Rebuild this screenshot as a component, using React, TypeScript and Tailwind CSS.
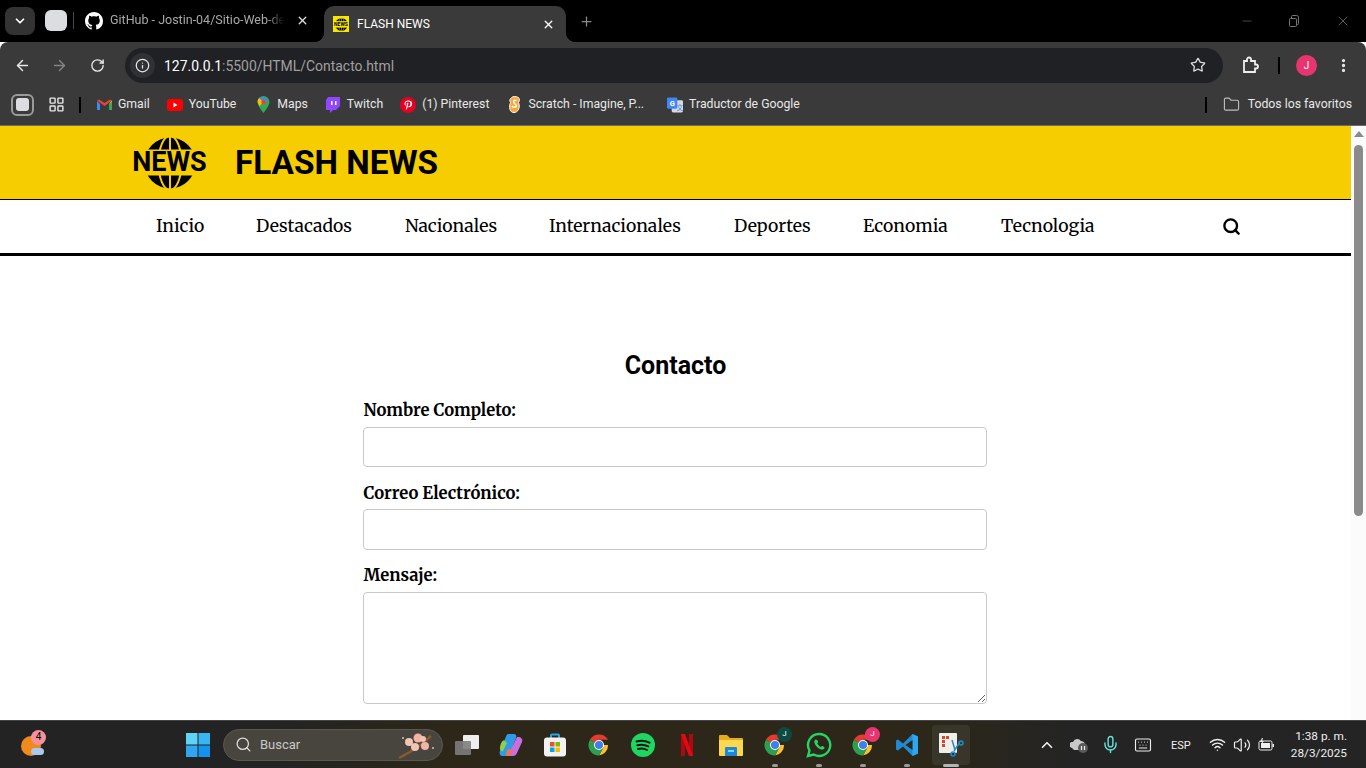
import React from "react";
import { ArrowLeft, ArrowRight, RotateCw, Star, MoreVertical, ChevronDown, X, Plus, Minus, Info, Search, ChevronUp, Mic, Keyboard, Wifi, Volume2, LayoutGrid, Folder } from "lucide-react";

const serif = "font-['Merriweather','DejaVu_Serif','Liberation_Serif',serif]";

function GitHubMark({ size = 18 }: { size?: number }) {
  return (
    <svg width={size} height={size} viewBox="0 0 16 16" fill="#fff">
      <path d="M8 0C3.58 0 0 3.58 0 8c0 3.54 2.29 6.53 5.47 7.59.4.07.55-.17.55-.38 0-.19-.01-.82-.01-1.49-2.01.37-2.53-.49-2.69-.94-.09-.23-.48-.94-.82-1.13-.28-.15-.68-.52-.01-.53.63-.01 1.08.58 1.23.82.72 1.21 1.87.87 2.33.66.07-.52.28-.87.51-1.07-1.78-.2-3.64-.89-3.64-3.95 0-.87.31-1.59.82-2.15-.08-.2-.36-1.02.08-2.12 0 0 .67-.21 2.2.82.64-.18 1.32-.27 2-.27s1.36.09 2 .27c1.53-1.04 2.2-.82 2.2-.82.44 1.1.16 1.92.08 2.12.51.56.82 1.27.82 2.15 0 3.07-1.87 3.75-3.65 3.95.29.25.54.73.54 1.48 0 1.07-.01 1.93-.01 2.2 0 .21.15.46.55.38A8.01 8.01 0 0 0 16 8c0-4.42-3.58-8-8-8z" />
    </svg>
  );
}

function NewsGlobe({ className, bg = "#f5cd00" }: { className?: string; bg?: string }) {
  return (
    <svg viewBox="0 0 52 52" className={className}>
      <circle cx="26" cy="26" r="25.500" fill="#000" />
      <ellipse cx="26" cy="26" rx="11.500" ry="27" fill="none" stroke={bg} strokeWidth="2" />
      <path d="M26 0v52" stroke={bg} strokeWidth="2" />
      <rect x="0" y="12.500" width="52" height="26" fill={bg} />
    </svg>
  );
}

function Favicon() {
  return (
    <span className="relative flex h-4 w-4 items-center justify-center bg-[#f7e600]">
      <NewsGlobe className="h-[13px] w-[13px]" bg="#f7e600" />
      <span className="absolute text-[5px] leading-none font-bold text-black font-['Roboto',sans-serif]">NEWS</span>
    </span>
  );
}

function ChromeIcon({ size = 24 }: { size?: number }) {
  return (
    <svg width={size} height={size} viewBox="0 0 48 48">
      <path d="M24 24 5.800 13.500A21 21 0 0 1 42.200 13.500H24Z" fill="#e33b2e" />
      <path d="M24 24h18.200A21 21 0 0 1 24 45l9-16Z" fill="#fbc02d" />
      <path d="M24 24l9 5-9 16A21 21 0 0 1 5.800 13.500Z" fill="#2e9e4f" />
      <circle cx="24" cy="24" r="10" fill="#fff" />
      <circle cx="24" cy="24" r="8" fill="#3f7fe8" />
    </svg>
  );
}

function Bookmark({ icon, label, className }: { icon: React.ReactNode; label: string; className?: string }) {
  return (
    <div className={"flex items-center gap-[6px] " + (className ?? "")}>
      <span className="flex h-4 w-4 items-center justify-center">{icon}</span>
      <span className="whitespace-nowrap text-[12.25px] text-[#e8e8e8] font-['Roboto',sans-serif]">{label}</span>
    </div>
  );
}

function TaskSlot({ children, dot, active }: { children: React.ReactNode; dot?: boolean; active?: boolean }) {
  return (
    <div className="relative flex h-[44px] w-[44px] shrink-0 items-center justify-center">
      {active && <span className="absolute inset-y-[2px] inset-x-[3px] rounded bg-[#38352a]" />}
      <span className="relative flex items-center justify-center">{children}</span>
      {dot && <span className="absolute bottom-0 left-1/2 h-[3px] w-[6px] -translate-x-1/2 rounded-full bg-[#9a9a9a]" />}
      {active && <span className="absolute bottom-0 left-1/2 h-[3px] w-[16px] -translate-x-1/2 rounded-full bg-[#b5b5b5]" />}
    </div>
  );
}

function Badge({ color, text }: { color: string; text: string }) {
  return (
    <span className={"absolute right-[-5px] top-[-6px] flex h-[15px] w-[15px] items-center justify-center rounded-full text-[8px] text-white font-['Roboto',sans-serif] " + color}>{text}</span>
  );
}

const navItems = [
  { label: "Inicio", w: "w-[100px]" },
  { label: "Destacados", w: "w-[149px]" },
  { label: "Nacionales", w: "w-[144px]" },
  { label: "Internacionales", w: "w-[185px]" },
  { label: "Deportes", w: "w-[129px]" },
  { label: "Economia", w: "w-[138px]" },
  { label: "Tecnologia", w: "w-[120px]" },
];

export default function App() {
  return (
    <div className="flex h-[768px] w-[1366px] flex-col overflow-hidden bg-white font-['Roboto',sans-serif]">
      {/* Tab strip */}
      <div className="flex h-[42px] shrink-0 items-end bg-black">
        <div className="mb-[7px] ml-[5px] flex h-[28px] w-[30px] items-center justify-center rounded-[8px] bg-[#333333]">
          <ChevronDown size={14} strokeWidth={3} color="#fff" />
        </div>
        <div className="mb-[11px] ml-[10px] h-[21px] w-[22px] rounded-[6px] bg-[#dcdde1]" />
        <div className="mb-[13px] ml-[6px] h-[17px] w-px bg-[#4a4a4a]" />
        <div className="mb-[12px] ml-[11px] flex w-[239px] items-center">
          <GitHubMark />
          <span className="ml-[7px] w-[174px] overflow-hidden whitespace-nowrap text-[12.5px] text-[#a9a9a9] [mask-image:linear-gradient(to_right,#000_90%,transparent)]">GitHub - Jostin-04/Sitio-Web-de-Noticias</span>
          <X size={13} strokeWidth={2.5} color="#ddd" className="ml-[12px]" />
        </div>
        <div className="relative flex h-[36px] w-[242px] items-center rounded-t-[10px] bg-[#3a3a3a] pl-[9px]">
          <span className="absolute bottom-0 left-[-10px] h-[10px] w-[10px] bg-[radial-gradient(circle_at_0_0,transparent_10px,#3a3a3a_10.500px)]" />
          <span className="absolute bottom-0 right-[-10px] h-[10px] w-[10px] bg-[radial-gradient(circle_at_100%_0,transparent_10px,#3a3a3a_10.500px)]" />
          <Favicon />
          <span className="ml-2 w-[185px] text-[12px] text-white">FLASH NEWS</span>
          <X size={13} strokeWidth={2.5} color="#fff" />
        </div>
        <Plus size={15} strokeWidth={2} color="#8a8a8a" className="mb-[13px] ml-[13px]" />
        <div className="mb-[13px] ml-auto flex items-center">
          <Minus size={14} strokeWidth={1} color="#777" className="mr-[34px]" />
          <svg width="12" height="12" viewBox="0 0 12 12" fill="none" stroke="#777" className="mr-[35px]"><rect x="1.500" y="3.500" width="7" height="8" rx="1" /><path d="M3.500 3.500V1.500a1 1 0 0 1 1-1h4a2 2 0 0 1 2 2v6a1 1 0 0 1-1 1h-1" /></svg>
          <X size={16} strokeWidth={1} color="#888" className="mr-[15px]" />
        </div>
      </div>

      {/* Toolbar */}
      <div className="flex h-[42px] shrink-0 items-center rounded-t-[8px] bg-[#3a3a3a] pt-[4px]">
        <ArrowLeft size={17} color="#e8e8e8" strokeWidth={2} className="ml-[14px]" />
        <ArrowRight size={17} color="#858585" strokeWidth={2} className="ml-[20px]" />
        <RotateCw size={15} color="#e8e8e8" strokeWidth={2.2} className="ml-[22px]" />
        <div className="ml-[20px] flex h-[35px] w-[1098px] items-center rounded-full bg-[#202124] pl-[5px]">
          <span className="flex h-[25px] w-[25px] items-center justify-center rounded-full bg-[#303134]">
            <Info size={15} color="#e8e8e8" strokeWidth={2} />
          </span>
          <span className="ml-[9px] pt-[2px] text-[13.95px] text-white">127.0.0.1<span className="text-[#a0a0a0]">:5500/HTML/Contacto.html</span></span>
          <Star size={16} color="#d8d8d8" strokeWidth={2} className="ml-auto mr-[17px]" />
        </div>
        <svg width="18" height="18" viewBox="0 0 18 18" fill="none" stroke="#eee" strokeWidth="1.800" className="ml-[18px]">
          <path d="M3 5h3V3.500a2 2 0 0 1 4 0V5h4v3.500h1a2 2 0 0 1 0 4h-1V16H3Z" />
        </svg>
        <div className="ml-[19px] h-[17px] w-[2px] bg-black" />
        <div className="ml-[16px] flex h-[21px] w-[21px] items-center justify-center rounded-full bg-[#e9356f] text-[10px] text-white">J</div>
        <MoreVertical size={17} color="#eee" strokeWidth={2.6} className="ml-[18px]" />
      </div>

      {/* Bookmarks */}
      <div className="flex h-[41px] shrink-0 items-center bg-[#3a3a3a] pl-[11px]">
        <div className="flex h-[22px] w-[23px] items-center justify-center rounded-[6px] border-2 border-[#9a9a9a]">
          <div className="h-[13px] w-[13px] rounded-[3px] bg-[#dcdde1]" />
        </div>
        <LayoutGrid size={17} color="#e8e8e8" strokeWidth={2} className="ml-[14px]" />
        <div className="ml-[14px] h-[16px] w-[2px] bg-black" />
        <Bookmark className="ml-[15px]" label="Gmail" icon={
          <svg width="15" height="12" viewBox="0 0 15 12">
            <path d="M0 2v9h3V5Z" fill="#4285f4" /><path d="M15 2v9h-3V5Z" fill="#34a853" /><path d="M0 1.500 7.500 7 15 1.500 13 .5 7.500 4 2 .500Z" fill="#ea4335" /><path d="M12 5l3-3.500V3Z" fill="#fbbc04" />
          </svg>} />
        <Bookmark className="ml-[17px]" label="YouTube" icon={
          <svg width="17" height="12" viewBox="0 0 16 12"><rect width="16" height="12" rx="3" fill="#f00" /><path d="M6.500 3.500v5l4-2.500Z" fill="#fff" /></svg>} />
        <Bookmark className="ml-[19px]" label="Maps" icon={
          <svg width="13" height="17" viewBox="0 0 13 17"><path d="M6.500 0A6 6 0 0 0 .5 6c0 4 6 11 6 11s6-7 6-11a6 6 0 0 0-6-6Z" fill="#34a853" /><path d="M2 2 6.500 6l4.500 0a6 6 0 0 0-9-4Z" fill="#4285f4" /><path d="M.5 6A6 6 0 0 1 2 2l4.500 4-4 4Z" fill="#fbbc04" /><circle cx="6.500" cy="6" r="2.200" fill="#ea4335" /></svg>} />
        <Bookmark className="ml-[17px]" label="Twitch" icon={
          <svg width="15" height="16" viewBox="0 0 15 16"><path d="M3 0h12v9l-4 4H8l-3 3v-3H1V3Z" fill="#9146ff" /><path d="M6 4h1.500v4H6Zm4 0h1.500v4H10Z" fill="#fff" /></svg>} />
        <Bookmark className="ml-[17px]" label="(1) Pinterest" icon={
          <svg width="16" height="16" viewBox="0 0 16 16"><circle cx="8" cy="8" r="8" fill="#e60023" /><path d="M8.300 3.500c-2.500 0-3.800 1.600-3.800 3.200 0 .8.400 1.600 1.100 1.900.3.100.3-.3.400-.6-.5-.6-.6-1-.4-1.800.3-1 1.200-1.700 2.500-1.700 1.500 0 2.300.9 2.300 2.100 0 1.500-.7 2.800-1.700 2.800-.6 0-1-.5-.8-1 .2-.7.500-1.400.5-1.900 0-1.100-1.600-1-1.600.5 0 .4.100.7.100.7l-.8 3.300c-.1.700 0 1.500 0 2 .6-.5 1-1.300 1.200-2l.4-1.500c.2.400.8.700 1.400.7 1.800 0 3-1.700 3-3.800 0-1.700-1.400-2.900-3.800-2.900Z" fill="#fff" /></svg>} />
        <Bookmark className="ml-[17px]" label="Scratch - Imagine, P..." icon={
          <svg width="13" height="17" viewBox="0 0 13 17"><path d="M6.500.5c3 0 5 1.500 5 3 0 1-.5 2-1 3 1 2 1 5 0 7s-2.500 3-4.500 3-3.500-1-4-3-.5-5 .5-7c-.5-1-1-2-.5-3S4 .5 6.500.5Z" fill="#f9a83a" stroke="#fff" /><path d="M8.500 4.500C6 3.500 4.500 6 6.500 7.500s3 3 .5 3.500-3-1-3-1" fill="none" stroke="#fff" strokeWidth="1.400" /></svg>} />
        <Bookmark className="ml-[23px]" label="Traductor de Google" icon={
          <svg width="17" height="16" viewBox="0 0 17 16"><rect x="5" y="3" width="12" height="13" rx="1.500" fill="#d7dbe0" /><rect width="11" height="12" rx="1.500" fill="#4285f4" /><text x="3" y="9" fontSize="8" fontWeight="700" fill="#fff" fontFamily="Roboto">G</text><text x="10" y="13" fontSize="7" fill="#4285f4" fontFamily="Noto Sans CJK SC">文</text></svg>} />
        <div className="ml-auto flex items-center">
          <div className="h-[16px] w-[2px] bg-black" />
          <Folder size={17} color="#bdbdbd" strokeWidth={1.6} className="ml-[16px]" />
          <span className="ml-[8px] mr-[14px] whitespace-nowrap text-[12.25px] text-[#e8e8e8]">Todos los favoritos</span>
        </div>
      </div>

      {/* Page viewport */}
      <div className="flex min-h-0 flex-1 border-t border-[#6b6b6b]">
        <div className="flex w-[1351px] flex-col overflow-hidden">
          <header className="flex h-[73px] shrink-0 items-center border-b-0 bg-[#f5cd00] pl-[132px]">
            <div className="relative flex h-[52px] w-[75px] items-center justify-center">
              <NewsGlobe className="h-[52px] w-[52px]" />
              <span className="absolute text-[27px] font-bold leading-none text-black font-['Roboto',sans-serif]">NEWS</span>
            </div>
            <h1 className="ml-[28px] text-[33.3px] font-bold leading-none text-black font-['Roboto',sans-serif]">FLASH NEWS</h1>
          </header>
          <nav className="flex h-[57px] shrink-0 items-center border-y border-b-[3px] border-black pl-[156px]">
            {navItems.map((n) => (
              <a key={n.label} className={n.w + " whitespace-nowrap text-[17.6px] text-black " + serif}>{n.label}</a>
            ))}
            <Search size={19} color="#000" strokeWidth={3} className="ml-[101px]" />
          </nav>
          <main className="flex flex-col items-center pt-[96px]">
            <h2 className="text-[25px] font-bold leading-[28px] text-black font-['Roboto',sans-serif]">Contacto</h2>
            <form className="mr-[2px] mt-[18px] flex w-[624px] flex-col">
              <label className={"h-[29px] pl-[1px] text-[16.6px] font-bold leading-[26px] text-black " + serif}>Nombre Completo:</label>
              <input className="h-[40px] rounded-[4px] border border-[#c8c8c8]" />
              <label className={"mt-[13px] h-[29px] pl-[1px] text-[16.6px] font-bold leading-[28px] text-black " + serif}>Correo Electrónico:</label>
              <input className="h-[41px] rounded-[4px] border border-[#c8c8c8]" />
              <label className={"mt-[13px] h-[29px] pl-[1px] text-[16.6px] font-bold leading-[26px] text-black " + serif}>Mensaje:</label>
              <textarea className="h-[112px] rounded-[4px] border border-[#c8c8c8]" />
            </form>
          </main>
        </div>
        <div className="flex w-[15px] shrink-0 flex-col items-center bg-[#fbfbfb] pt-[5px]">
          <div className="h-0 w-0 border-x-[5px] border-b-[6px] border-x-transparent border-b-[#8a8a8a]" />
          <div className="ml-[-1px] mt-[8px] h-[371px] w-[9px] rounded-full bg-[#8a8a8a]" />
        </div>
      </div>

      {/* Taskbar */}
      <div className="flex h-[48px] shrink-0 items-center border-t border-[#444] bg-[linear-gradient(to_right,#232323_20%,#2c2718_33%,#2c2718_68%,#242424_78%)]">
        <div className="relative ml-[21px] h-[24px] w-[30px]">
          <span className="absolute left-0 top-[3px] h-[20px] w-[20px] rounded-full bg-[#f08a1c]" />
          <span className="absolute left-[10px] top-[15px] h-[7px] w-[13px] rounded-full bg-[#a9c9ef]" />
          <span className="absolute left-[10px] top-[-3px] flex h-[15px] w-[15px] items-center justify-center rounded-full bg-[#f7929c] text-[10px] leading-none text-black">4</span>
        </div>
        <svg width="24" height="24" viewBox="0 0 24 24" className="ml-[135px]">
          <rect width="11.500" height="11.500" fill="#5fd3f8" /><rect x="12.500" width="11.500" height="11.500" fill="#38b6f2" /><rect y="12.500" width="11.500" height="11.500" fill="#2ea6f0" /><rect x="12.500" y="12.500" width="11.500" height="11.500" fill="#1293ee" />
        </svg>
        <div className="ml-[13px] flex h-[32px] w-[220px] items-center rounded-full border border-[#5a574c] bg-[#47453d] pl-[11px]">
          <Search size={17} color="#ddd" strokeWidth={1.8} />
          <span className="ml-[8px] text-[13px] text-[#c9c9c9]">Buscar</span>
          <svg width="44" height="30" viewBox="0 0 44 30" className="ml-auto mr-[3px]">
            <path d="M4 28 22 18 36 6" stroke="#8a5a30" strokeWidth="2.500" fill="none" />
            <circle cx="14" cy="12" r="4" fill="#f2c4b4" /><circle cx="23" cy="8" r="4.500" fill="#f0b5a6" /><circle cx="20" cy="17" r="4" fill="#f2c4b4" /><circle cx="30" cy="16" r="4" fill="#f0b5a6" /><circle cx="28" cy="9" r="3" fill="#f2c4b4" /><circle cx="8" cy="8" r="1" fill="#d9c4b4" /><circle cx="38" cy="18" r="1" fill="#d9c4b4" />
          </svg>
        </div>
        <div className="ml-[2px] flex items-center">
          <TaskSlot>
            <span className="relative block h-[20px] w-[24px]">
              <span className="absolute left-[8px] top-0 h-[14px] w-[16px] rounded-[1px] bg-[#eeeeee]" />
              <span className="absolute left-0 top-[6px] h-[14px] w-[16px] rounded-[1px] bg-[#7d7d7d]/90" />
            </span>
          </TaskSlot>
          <TaskSlot>
            <svg width="24" height="24" viewBox="0 0 24 24">
              <path d="M9 1h6c2 0 3 2 2 4l-6 15c-1 2-2 3-4 3H3c-2 0-3-3-2-5l5-12C7 3 8 1 9 1Z" fill="#2f9be8" />
              <path d="M6 8c-1-2-4 0-5 6-.5 3 1 5 3 4l4-8Z" fill="#8ed04c" />
              <path d="M18 4 10 20c-1 2-2 3-3 3h7c2 0 3-1 4-3l5-11c1-3-1-5-3-5Z" fill="#c86ee0" />
              <path d="M8 23c-2 0-1-4 1-7l5 1c-1 3-3 6-6 6Z" fill="#f2734f" />
            </svg>
          </TaskSlot>
          <TaskSlot>
            <svg width="24" height="24" viewBox="0 0 24 24">
              <path d="M8 5V2.500a1 1 0 0 1 1-1h6a1 1 0 0 1 1 1V5" fill="none" stroke="#28a7e8" strokeWidth="2" />
              <rect x="1" y="4.500" width="22" height="19" rx="3" fill="#f2f2f2" />
              <rect x="7" y="9" width="4.500" height="4.500" fill="#f25022" /><rect x="12.500" y="9" width="4.500" height="4.500" fill="#7fba00" /><rect x="7" y="14.500" width="4.500" height="4.500" fill="#00a4ef" /><rect x="12.500" y="14.500" width="4.500" height="4.500" fill="#ffb900" />
            </svg>
          </TaskSlot>
          <TaskSlot><ChromeIcon /></TaskSlot>
          <TaskSlot>
            <svg width="24" height="24" viewBox="0 0 24 24">
              <circle cx="12" cy="12" r="12" fill="#1ed760" />
              <path d="M5.500 8.500c4-1.200 9-.9 13 1.200M6.300 12.300c3.500-1 7.500-.7 11 1.100M7 16c3-.8 6.500-.5 9 1" stroke="#151515" strokeWidth="2" strokeLinecap="round" fill="none" />
            </svg>
          </TaskSlot>
          <TaskSlot>
            <svg width="14" height="22" viewBox="0 0 14 22">
              <path d="M1 0h4v22l-4 .5Z" fill="#b20710" /><path d="M9 0h4v22.500l-4-.5Z" fill="#b20710" /><path d="M1 0h4l8 22.500-4-.5Z" fill="#e50914" />
            </svg>
          </TaskSlot>
          <TaskSlot>
            <svg width="26" height="24" viewBox="0 0 26 24">
              <path d="M1 3a1 1 0 0 1 1-1h7l3 3h12a1 1 0 0 1 1 1v3H1Z" fill="#e5ad1e" />
              <path d="M1 7h24v15a1 1 0 0 1-1 1H2a1 1 0 0 1-1-1Z" fill="#fbd84e" />
              <path d="M7 15a1 1 0 0 1 1-1h10a1 1 0 0 1 1 1v8H7Z" fill="#1e88d8" />
              <rect x="10" y="17" width="6" height="2" fill="#8fd0f5" />
            </svg>
          </TaskSlot>
          <TaskSlot dot>
            <ChromeIcon />
            <Badge color="bg-[#0d4a42]" text="J" />
          </TaskSlot>
          <TaskSlot dot>
            <svg width="26" height="26" viewBox="0 0 26 26">
              <path d="M13 2A11 11 0 0 0 3.500 18.500L2 24l5.700-1.500A11 11 0 1 0 13 2Z" fill="none" stroke="#25d366" strokeWidth="2.400" />
              <path d="M9.500 7.500c-1 .5-1.500 2-1 3.500 1 3 3.500 5.500 6.500 6.500 1.500.5 3-.2 3.500-1.500l-.2-1-2.300-1.200-1 1.200c-1.500-.5-3-2-3.700-3.700l1-1-1-2.400Z" fill="#25d366" />
            </svg>
          </TaskSlot>
          <TaskSlot dot>
            <ChromeIcon />
            <Badge color="bg-[#e9356f]" text="J" />
          </TaskSlot>
          <TaskSlot dot>
            <svg width="24" height="24" viewBox="0 0 24 24">
              <path d="M17.500 1 8 10.500 3 6.500 1 7.500v9l2 1 5-4L17.500 23l5.500-2.500v-17Z" fill="#1f8ad2" />
              <path d="M17.500 1 23 3.500v17L17.500 23Z" fill="#2da8f0" />
              <path d="M17.500 7 10.500 12l7 5Z" fill="#2c2718" />
            </svg>
          </TaskSlot>
          <TaskSlot active>
            <svg width="26" height="26" viewBox="0 0 26 26">
              <rect x="1" y="1" width="18" height="20" rx="1" fill="#f1ede8" />
              <path d="M4 4h3v3H4Zm4 0h3v3H8ZM4 8h3v3H4Zm0 4h3v3H4Z" fill="#d9472b" />
              <path d="M14 8l3 10M22 10l-6 9" stroke="#1f8ad2" strokeWidth="1.500" />
              <circle cx="23" cy="11" r="2" fill="none" stroke="#1f8ad2" strokeWidth="1.500" />
              <circle cx="15" cy="22" r="2" fill="none" stroke="#1f8ad2" strokeWidth="1.500" />
            </svg>
          </TaskSlot>
        </div>

        <div className="ml-[65px] flex items-center">
          <ChevronUp size={18} color="#f0f0f0" strokeWidth={2.2} />
          <svg width="18" height="16" viewBox="0 0 18 16" className="ml-[14px]">
            <path d="M2 11a3 3 0 0 1 1-6 4.500 4.500 0 0 1 8-1 4 4 0 0 1 4 5l-3 4H4Z" fill="#c9c9c9" />
            <circle cx="13" cy="11" r="5" fill="#5a5a5a" />
            <path d="M11.500 9v4M14.500 9v4" stroke="#eee" strokeWidth="1.200" />
          </svg>
          <Mic size={19} color="#63e0d8" strokeWidth={1.8} className="ml-[13px]" />
          <Keyboard size={18} color="#eee" strokeWidth={1.5} className="ml-[14px]" />
          <span className="ml-[19px] mt-[3px] w-[20px] text-[11px] text-[#eee]">ESP</span>
          <Wifi size={17} color="#f0f0f0" strokeWidth={2} className="ml-[18px]" />
          <Volume2 size={18} color="#f0f0f0" strokeWidth={1.6} className="ml-[7px]" />
          <svg width="17" height="14" viewBox="0 0 17 14" className="ml-[7px]">
            <rect x="1" y="3" width="13" height="9" rx="1.500" fill="none" stroke="#f0f0f0" />
            <rect x="3" y="5" width="9" height="5" fill="#f0f0f0" />
            <rect x="14.500" y="6" width="1.500" height="3" fill="#f0f0f0" />
            <path d="M4 0 2 4h2l-1 3 3-4H4l1-3Z" fill="#f0f0f0" />
          </svg>
          <div className="ml-[12px] flex w-[60px] flex-col items-end text-[11.8px] leading-[17px] text-[#eeeeee]">
            <span className="whitespace-nowrap">1:38 p. m.</span>
            <span>28/3/2025</span>
          </div>
        </div>
      </div>
    </div>
  );
}
